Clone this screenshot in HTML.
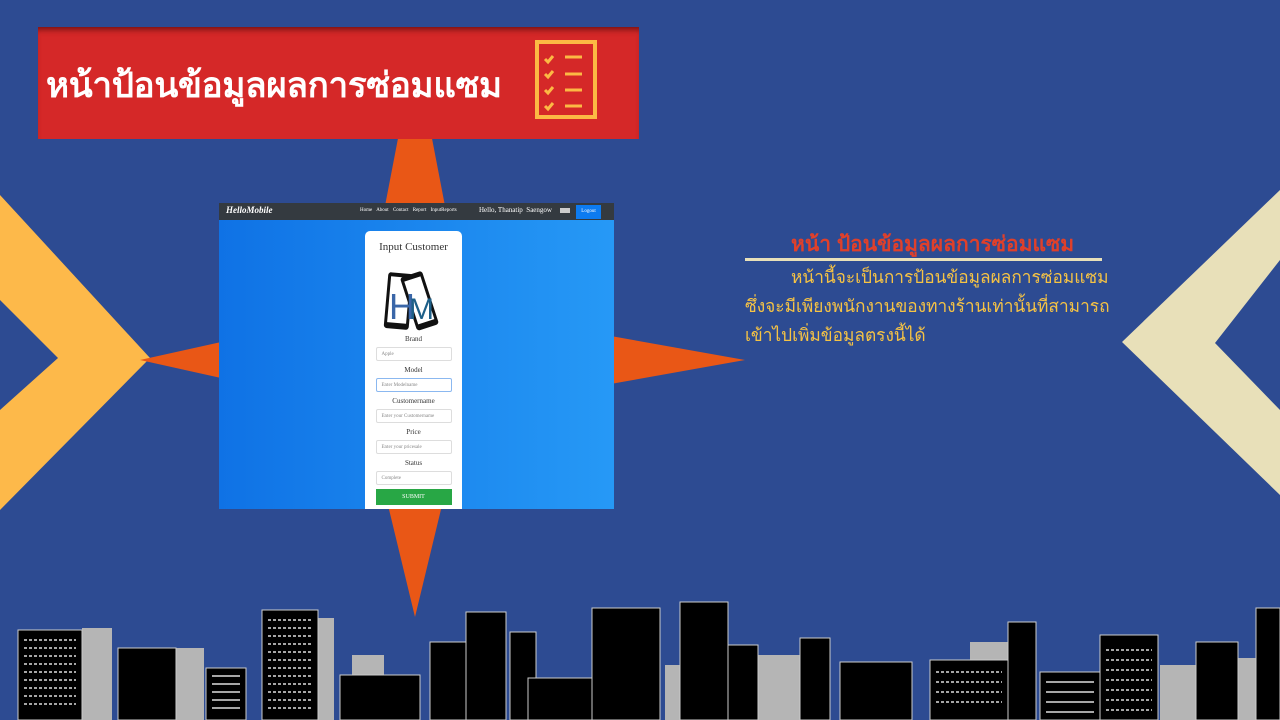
<!DOCTYPE html>
<html><head><meta charset="utf-8"><style>
*{margin:0;padding:0;box-sizing:border-box}
body{width:1280px;height:720px;background:#2d4b92;position:relative;overflow:hidden;font-family:"Liberation Sans","Noto Sans CJK SC",sans-serif}
.abs{position:absolute}
.hdr{left:38px;top:27px;width:601px;height:112px;background:#d52828;box-shadow:inset 0 6px 6px -3px #7a1414}
.hdr h1{position:absolute;left:8px;top:31px;color:#fff;font-size:35px;font-weight:bold;letter-spacing:-0.3px}
.shot{left:219px;top:203px;width:395px;height:306px;background:linear-gradient(90deg,#0f72e5,#2699f6);overflow:hidden;font-family:"Liberation Serif",serif}
.nav{height:17px;background:#343a40;position:relative}
.card{position:absolute;left:146px;top:28px;width:97px;height:290px;background:#fff;border-radius:5px;text-align:center;color:#333}
.lbl{font-size:7px;height:10px;line-height:10px;margin-top:4px}
.inp{margin:3px auto 0;width:76px;height:14px;border:1px solid #ddd;border-radius:2px;font-size:5px;color:#888;text-align:left;padding:4px 5px}
.rt{left:745px;top:232px;width:370px;color:#f6c344;font-size:17.3px;line-height:29px}
</style></head><body>
<svg class="abs" style="left:0;top:0" width="1280" height="720">
<polygon points="0,195 150,358 0,510 0,410 58,358 0,300" fill="#fdb94a"/>
<polygon points="1280,190 1280,260 1215,343 1280,410 1280,495 1122,342" fill="#e8e0b9"/>
<polygon points="415,50 465,310 745,360 465,410 415,617 365,410 140,360 365,310" fill="#e95716"/>
</svg>
<div class="abs hdr"><h1>หน้าป้อนข้อมูลผลการซ่อมแซม</h1>
<svg class="abs" style="left:497px;top:13px" width="62" height="80"><rect x="2" y="2" width="58" height="75" fill="none" stroke="#fcb944" stroke-width="4"/>
<g stroke="#fcb944" stroke-width="3" fill="none"><path d="M10,19l3,3l5,-6M10,34l3,3l5,-6M10,50l3,3l5,-6M10,66l3,3l5,-6"/><path d="M30,17h17M30,34h17M30,50h17M30,66h17"/></g></svg>
</div>
<div class="abs shot">
<div class="nav"><span style="position:absolute;left:7px;top:2px;color:#fff;font-size:9px;font-weight:bold;font-style:italic">HelloMobile</span>
<span style="position:absolute;left:141px;top:5px;color:#fff;font-size:5px;word-spacing:3px">Home About Contact Report InputReports</span>
<span style="position:absolute;left:260px;top:3px;color:#fff;font-size:7px">Hello, Thanatip&nbsp; Saengow</span>
<span style="position:absolute;left:341px;top:5px;width:10px;height:5px;background:#ccc"></span>
<span style="position:absolute;left:357px;top:2px;width:25px;height:14px;background:#0d7bf0;color:#fff;font-size:5px;line-height:14px;text-align:center">Logout</span></div>
<div class="card">
<div style="font-size:11px;margin-top:10px;height:14px">Input Customer</div>
<svg width="62" height="62" style="margin-top:16px;display:block;margin-left:17px"><rect x="4" y="2" width="25" height="56" rx="3" fill="#111" transform="rotate(5 16 30)"/><rect x="7" y="6" width="19" height="46" fill="#fff" transform="rotate(5 16 30)"/><rect x="26" y="2" width="23" height="56" rx="3" fill="#111" transform="rotate(-18 37 30)"/><rect x="29" y="7" width="17" height="45" fill="#fff" transform="rotate(-18 37 30)"/><text x="7" y="48" font-size="36" fill="#3a66a8" font-family="Liberation Sans">H</text><text x="27" y="48" font-size="30" fill="#1d5f88" font-family="Liberation Sans">M</text></svg>
<div class="lbl" style="margin-top:1px">Brand</div><div class="inp">Apple</div>
<div class="lbl">Model</div><div class="inp" style="border-color:#8bb8f0">Enter Modelname</div>
<div class="lbl">Customername</div><div class="inp">Enter your Customername</div>
<div class="lbl">Price</div><div class="inp">Enter your pricesale</div>
<div class="lbl">Status</div><div class="inp">Complete</div>
<div style="margin:4px auto 0;width:76px;height:16px;background:#28a745;color:#fff;font-size:6px;line-height:16px">SUBMIT</div>
</div></div>
<div class="abs rt"><div style="color:#e0402a;font-size:21px;padding-left:46px;line-height:26px;font-weight:bold">หน้า ป้อนข้อมูลผลการซ่อมแซม</div>
<div style="height:3px;background:#e8e0b9;width:357px;margin-bottom:2px"></div>
<div style="text-indent:46px">หน้านี้จะเป็นการป้อนข้อมูลผลการซ่อมแซม ซึ่งจะมีเพียงพนักงานของทางร้านเท่านั้นที่สามารถเข้าไปเพิ่มข้อมูลตรงนี้ได้</div></div>
<svg class="abs" style="left:0;top:580px" width="1280" height="140">
<g fill="#b5b5b5"><rect x="82" y="48" width="30" height="92"/><rect x="176" y="68" width="28" height="72"/><rect x="318" y="38" width="16" height="102"/><rect x="352" y="75" width="32" height="65"/><rect x="758" y="75" width="42" height="65"/><rect x="1160" y="85" width="72" height="55"/><rect x="1238" y="78" width="42" height="62"/><rect x="665" y="85" width="35" height="55"/><rect x="970" y="62" width="40" height="78"/></g>
<g fill="#000" stroke="#ccc" stroke-width="1"><rect x="18" y="50" width="64" height="90"/><rect x="118" y="68" width="58" height="72"/><rect x="206" y="88" width="40" height="52"/><rect x="262" y="30" width="56" height="110"/><rect x="340" y="95" width="80" height="45"/><rect x="430" y="62" width="46" height="78"/><rect x="466" y="32" width="40" height="108"/><rect x="510" y="52" width="26" height="88"/><rect x="528" y="98" width="72" height="42"/><rect x="592" y="28" width="68" height="112"/><rect x="680" y="22" width="48" height="118"/><rect x="728" y="65" width="30" height="75"/><rect x="800" y="58" width="30" height="82"/><rect x="840" y="82" width="72" height="58"/><rect x="930" y="80" width="78" height="60"/><rect x="1008" y="42" width="28" height="98"/><rect x="1040" y="92" width="60" height="48"/><rect x="1100" y="55" width="58" height="85"/><rect x="1196" y="62" width="42" height="78"/><rect x="1256" y="28" width="24" height="112"/></g>
<g stroke="#ddd" stroke-width="1.5" stroke-dasharray="3 2"><path d="M268,40h44M268,48h44M268,56h44M268,64h44M268,72h44M268,80h44M268,88h44M268,96h44M268,104h44M268,112h44M268,120h44M268,128h44"/><path d="M24,60h52M24,68h52M24,76h52M24,84h52M24,92h52M24,100h52M24,108h52M24,116h52M24,124h52"/><path d="M1106,70h46M1106,80h46M1106,90h46M1106,100h46M1106,110h46M1106,120h46M1106,130h46"/><path d="M1046,102h48M1046,112h48M1046,122h48M1046,132h48" stroke-dasharray="none"/><path d="M936,92h66M936,102h66M936,112h66M936,122h66"/><path d="M212,96h28M212,104h28M212,112h28M212,120h28M212,128h28" stroke-dasharray="none"/></g>
</svg>
</body></html>
